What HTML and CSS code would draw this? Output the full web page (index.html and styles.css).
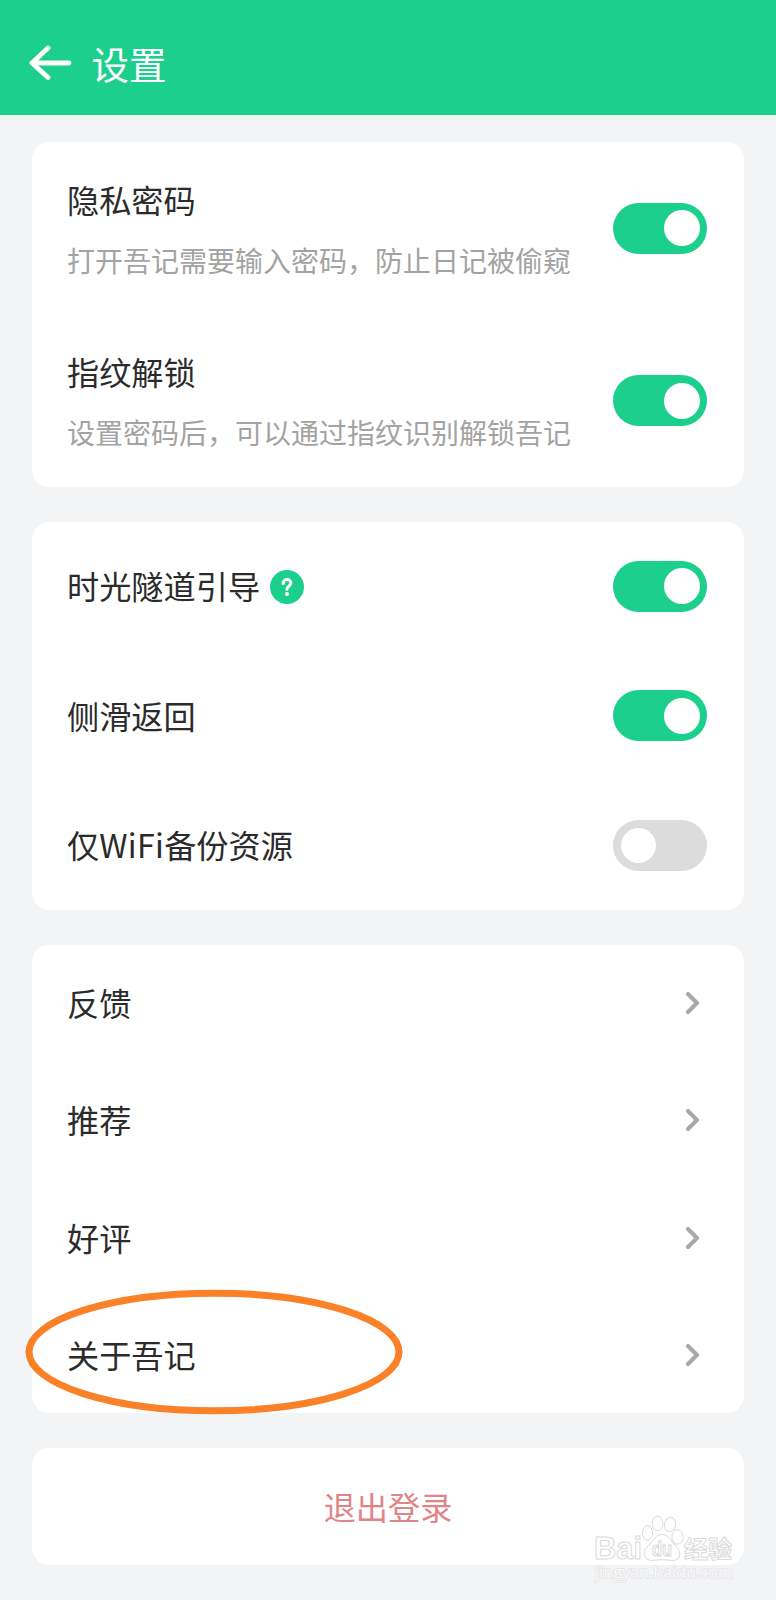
FILE: index.html
```html
<!DOCTYPE html>
<html lang="zh-CN">
<head>
  <meta charset="UTF-8">
  <meta name="viewport" content="width=device-width, initial-scale=1.0">
  <title>设置</title>
  <link rel="stylesheet" href="styles.css">
</head>
<body>
  <header class="header">
    <svg class="back-icon" width="44" height="36" viewBox="0 0 44 36">
      <path d="M20 3 L4 18 L20 32.5 M4 18 H41" />
    </svg>
    <h1 class="header-title">设置</h1>
  </header>

  <main class="settings">
    <section class="card">
      <div class="row row-tall">
        <div class="row-text">
          <span class="label">隐私密码</span>
          <span class="hint">打开吾记需要输入密码，防止日记被偷窥</span>
        </div>
        <span class="switch on"></span>
      </div>
      <div class="row row-tall">
        <div class="row-text">
          <span class="label">指纹解锁</span>
          <span class="hint">设置密码后，可以通过指纹识别解锁吾记</span>
        </div>
        <span class="switch on"></span>
      </div>
    </section>

    <section class="card">
      <div class="row row-medium">
        <div class="label-group">
          <span class="label">时光隧道引导</span>
          <svg class="help-icon" width="34" height="34" viewBox="0 0 34 34">
            <circle class="help-bg" cx="17" cy="17" r="17" />
            <path class="help-mark" d="M13.1 13.4 C13.1 8.3 20.9 8.4 20.9 13.1 C20.9 16 17 16 17 19.3" />
            <circle class="help-dot" cx="17" cy="24" r="2" />
          </svg>
        </div>
        <span class="switch on"></span>
      </div>
      <div class="row row-medium">
        <span class="label">侧滑返回</span>
        <span class="switch on"></span>
      </div>
      <div class="row row-medium">
        <span class="label">仅<span class="latin">WiFi</span>备份资源</span>
        <span class="switch"></span>
      </div>
    </section>

    <section class="card">
      <div class="row">
        <span class="label">反馈</span>
        <svg class="chevron" width="15" height="24" viewBox="0 0 15 24"><path d="M3 3 L12 12 L3 21" /></svg>
      </div>
      <div class="row">
        <span class="label">推荐</span>
        <svg class="chevron" width="15" height="24" viewBox="0 0 15 24"><path d="M3 3 L12 12 L3 21" /></svg>
      </div>
      <div class="row">
        <span class="label">好评</span>
        <svg class="chevron" width="15" height="24" viewBox="0 0 15 24"><path d="M3 3 L12 12 L3 21" /></svg>
      </div>
      <div class="row row-marked">
        <span class="label">关于吾记</span>
        <svg class="chevron" width="15" height="24" viewBox="0 0 15 24"><path d="M3 3 L12 12 L3 21" /></svg>
        <svg class="marker" width="378" height="126" viewBox="0 0 378 126">
          <ellipse cx="189" cy="63" rx="185" ry="58.8" />
        </svg>
      </div>
    </section>

    <section class="card">
      <div class="row row-logout">
        <span class="label">退出登录</span>
      </div>
    </section>
  </main>

  <svg class="watermark" width="150" height="76" viewBox="0 0 150 76">
    <g class="watermark-outline">
      <text class="wm-brand" x="6" y="49" textLength="48" lengthAdjust="spacingAndGlyphs">Bai</text>
      <text class="wm-brand-cn" x="96" y="48" textLength="48" lengthAdjust="spacingAndGlyphs">经验</text>
      <ellipse cx="59.5" cy="23" rx="5.2" ry="7.2" />
      <ellipse cx="69.5" cy="13.5" rx="5.4" ry="7.4" />
      <ellipse cx="82" cy="14.5" rx="5.6" ry="7.2" transform="rotate(12 82 14.5)" />
      <ellipse cx="89.5" cy="27" rx="5.6" ry="7.2" />
      <path d="M74 24.5 C66 25 66 31 60 36 C54 41 56 51 64 50.5 C71 49.5 77 49.5 84 50.5 C93 51 94 42 88 36 C82 31 82 25 74 24.5 Z" />
    </g>
    <text class="wm-du" x="64" y="46" textLength="20" lengthAdjust="spacingAndGlyphs">du</text>
    <text class="wm-url" x="7" y="68" textLength="138" lengthAdjust="spacingAndGlyphs">jingyan.baidu.com</text>
  </svg>
</body>
</html>
```

FILE: styles.css
```css
* {
  box-sizing: border-box;
  margin: 0;
  padding: 0;
}

body {
  position: relative;
  height: 1600px;
  overflow: hidden;
  font-family: "Noto Sans CJK SC", sans-serif;
  background-color: #f3f4f6;
  color: #2b2b2b;
}

.header {
  display: flex;
  align-items: center;
  gap: 19.5px;
  height: 115px;
  padding: 10px 28px 0;
  background-color: #1ccf8d;
}

.back-icon {
  margin-top: 1px;
  fill: none;
  stroke: #fff;
  stroke-width: 4.8;
  stroke-linecap: round;
  stroke-linejoin: round;
}

.header-title {
  color: #fff;
  font-size: 37.5px;
  font-weight: 400;
  line-height: 50px;
}

.settings {
  display: flex;
  flex-direction: column;
  gap: 34.7px;
  padding: 27px 32px;
}

.card {
  background: #fff;
  border-radius: 17px;
}

.row {
  display: flex;
  align-items: center;
  justify-content: space-between;
  height: 117.2px;
  padding: 0 37px 0 35px;
}

.row-tall {
  height: 172.5px;
}

.row-medium {
  height: 129.4px;
}

.row-text {
  display: flex;
  flex-direction: column;
  gap: 15px;
}

.label-group {
  display: flex;
  align-items: center;
  gap: 10px;
}

.label {
  padding-bottom: 2px;
  font-size: 32.2px;
  line-height: 46px;
}

.latin {
  letter-spacing: 0.3px;
}

.hint {
  color: #a3a3a3;
  font-size: 28px;
  line-height: 42px;
}

/* Switch */
.switch {
  display: flex;
  align-items: center;
  width: 94px;
  height: 51px;
  padding: 0 8px;
  border-radius: 26px;
  background-color: #dcdcdc;
}

.switch::before {
  content: "";
  width: 35px;
  height: 35px;
  border-radius: 50%;
  background: #fff;
}

.switch.on {
  justify-content: flex-end;
  padding: 0 7.5px;
  background-color: #1ccf8d;
}

.switch.on::before {
  width: 36px;
  height: 36px;
}

/* Icons */
.help-icon {
  margin-top: 1px;
}

.help-bg {
  fill: #1ccf8d;
}

.help-mark {
  fill: none;
  stroke: #fff;
  stroke-width: 3;
  stroke-linecap: round;
}

.help-dot {
  fill: #fff;
}

.chevron {
  margin-right: 7px;
  fill: none;
  stroke: #a9a9a9;
  stroke-width: 4.2;
  stroke-linecap: round;
  stroke-linejoin: round;
}

.row-marked {
  position: relative;
}

.marker {
  position: absolute;
  left: -7px;
  top: -7.5px;
  fill: none;
  stroke: #fb8128;
  stroke-width: 7;
}

.row-logout {
  justify-content: center;
  padding: 0;
  color: #df8587;
}

/* Watermark */
.watermark {
  position: absolute;
  left: 588px;
  top: 1510px;
}

.watermark-outline {
  fill: #fff;
  stroke: #dadada;
  stroke-width: 1;
}

.wm-brand {
  font-family: "Liberation Sans", sans-serif;
  font-size: 31px;
  font-weight: bold;
}

.wm-brand-cn {
  font-size: 24px;
  font-weight: bold;
}

.wm-du {
  fill: #fff;
  stroke: #d4d4d4;
  stroke-width: 1;
  font-family: "Liberation Sans", sans-serif;
  font-size: 20px;
  font-weight: bold;
}

.wm-url {
  fill: #fafafa;
  stroke: #e2e3e5;
  stroke-width: 1.6;
  paint-order: stroke;
  font-family: "Open Sans", sans-serif;
  font-size: 17px;
}
```
